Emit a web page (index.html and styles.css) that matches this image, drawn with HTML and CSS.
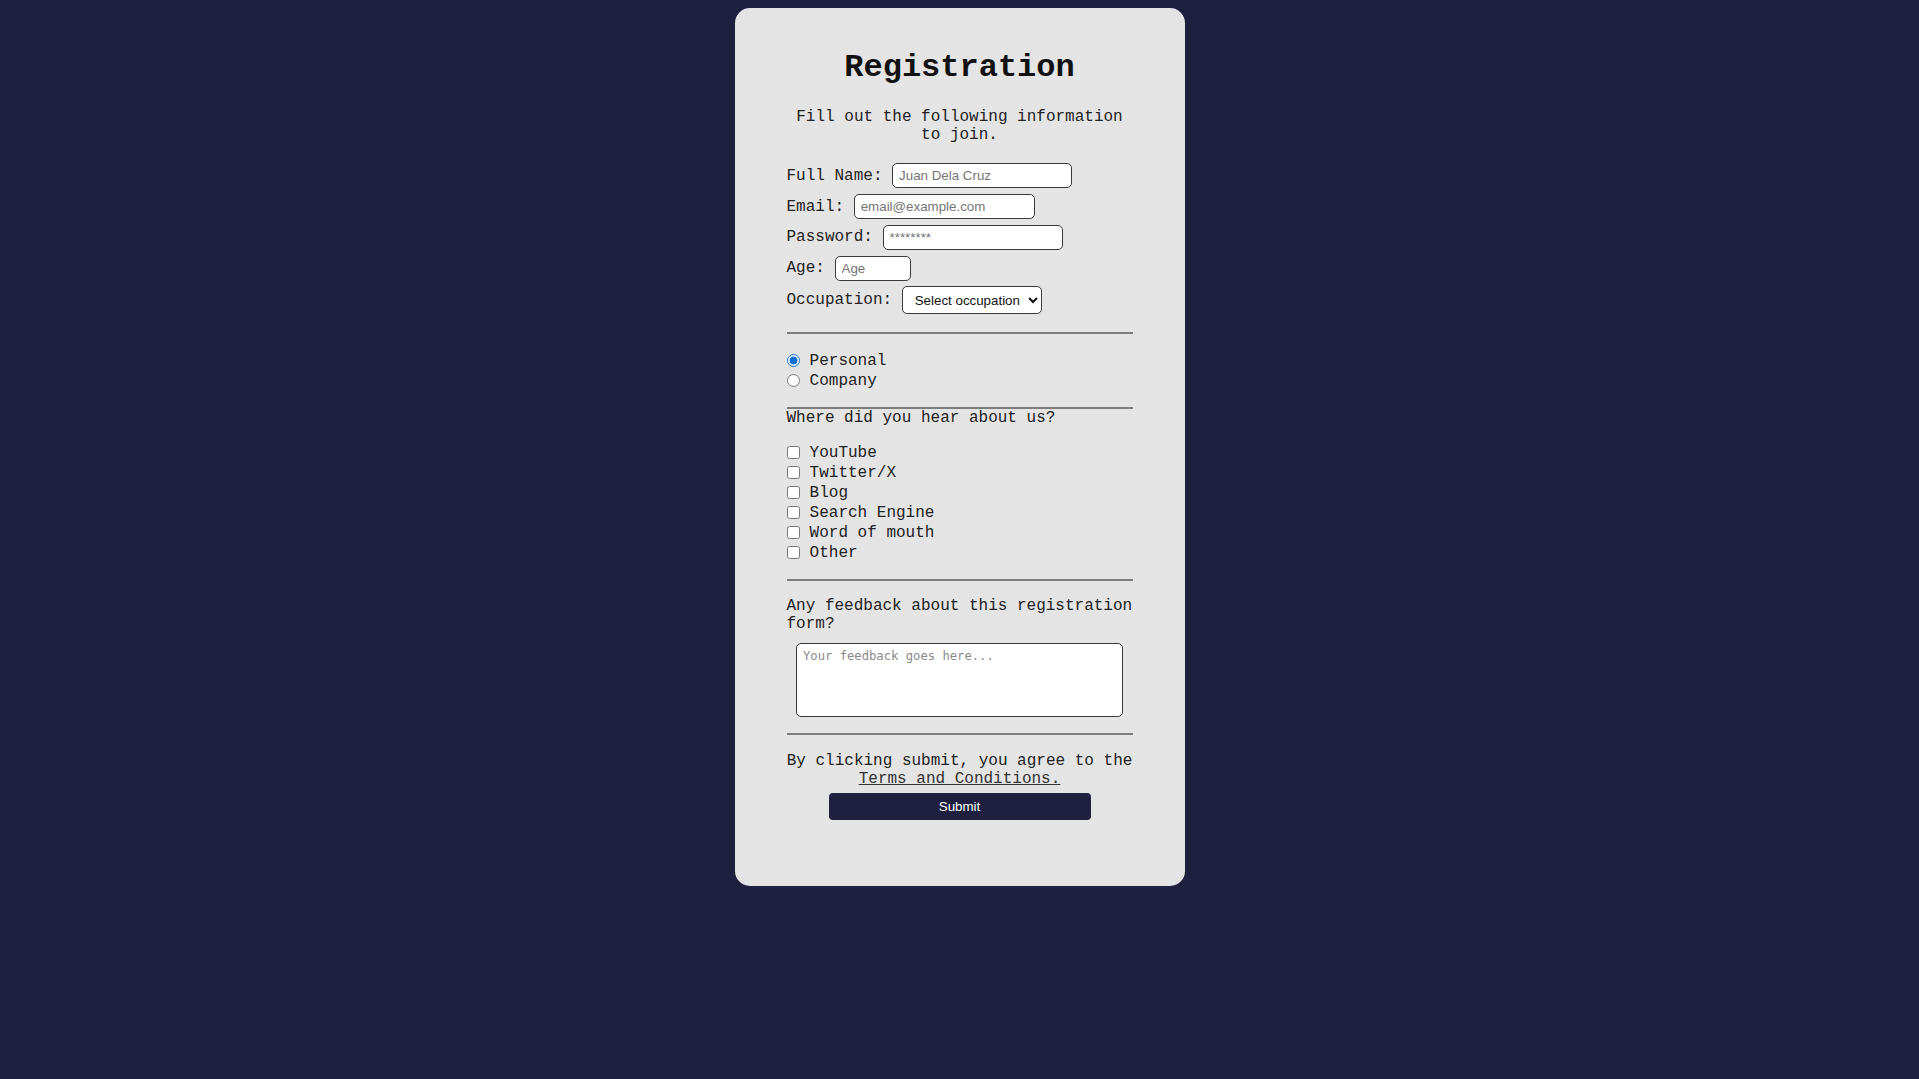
FILE: index.html
```html
<!DOCTYPE html>
<html lang="en">
<head>
<meta charset="utf-8">
<title>Registration</title>
<link rel="stylesheet" href="styles.css">
</head>
<body>
<main class="card">
  <h1 class="title">Registration</h1>
  <p class="subtitle">Fill out the following information to join.</p>
  <form class="form">
    <div class="field"><label class="label" for="name">Full Name:</label><input class="text-input w180" id="name" type="text" placeholder="Juan Dela Cruz"></div>
    <div class="field"><label class="label" for="email">Email:</label><input class="text-input w181" id="email" type="email" placeholder="email@example.com"></div>
    <div class="field"><label class="label" for="pw">Password:</label><input class="text-input w180" id="pw" type="password" placeholder="********"></div>
    <div class="field"><label class="label" for="age">Age:</label><input class="text-input w76" id="age" type="number" placeholder="Age"></div>
    <div class="field field-select"><label class="label" for="occ">Occupation:</label><select class="select" id="occ"><option>Select occupation</option><option>Student</option><option>Employed</option><option>Other</option></select></div>

    <div class="divider d1"></div>

    <div class="options radios">
      <label class="option"><input class="mark" type="radio" name="type" checked> Personal</label>
      <label class="option"><input class="mark" type="radio" name="type"> Company</label>
    </div>

    <div class="divider d2"></div>
    <p class="question">Where did you hear about us?</p>

    <div class="options checks">
      <label class="option"><input class="mark" type="checkbox"> YouTube</label>
      <label class="option"><input class="mark" type="checkbox"> Twitter/X</label>
      <label class="option"><input class="mark" type="checkbox"> Blog</label>
      <label class="option"><input class="mark" type="checkbox"> Search Engine</label>
      <label class="option"><input class="mark" type="checkbox"> Word of mouth</label>
      <label class="option"><input class="mark" type="checkbox"> Other</label>
    </div>

    <div class="divider d3"></div>
    <p class="question feedback-q">Any feedback about this registration form?</p>
    <textarea class="feedback" placeholder="Your feedback goes here..."></textarea>

    <div class="divider d4"></div>
    <p class="terms">By clicking submit, you agree to the <a class="terms-link" href="#">Terms and Conditions.</a></p>
    <button class="submit" type="button">Submit</button>
  </form>
</main>
</body>
</html>
```
FILE: styles.css
```css
html, body {
  margin: 0;
  padding: 0;
}
body {
  background: #1f2040;
  font-family: "Liberation Mono", "Courier New", monospace;
  font-size: 16px;
  color: #222;
  min-height: 1079px;
}
.card {
  box-sizing: border-box;
  width: 450px;
  margin: 8px auto 0;
  padding: 20px 52px 66px;
  background: #e4e4e4;
  border-radius: 15px;
}
.title {
  margin: 21.44px 0;
  text-align: center;
  font-size: 32px;
  font-weight: bold;
  color: #111;
}
.subtitle {
  margin: 0 0 19.6px;
  text-align: center;
}
.form {
  margin: 0;
}
.field {
  display: flex;
  align-items: center;
  height: 25px;
  margin-bottom: 5.75px;
}
.field-select {
  height: 28px;
  margin-bottom: 0;
}
.label {
  margin-right: 9.6px;
  white-space: pre;
}
.text-input {
  box-sizing: border-box;
  height: 25px;
  padding: 0 6px;
  border: 1px solid #3a3a3a;
  border-radius: 5px;
  background: #fff;
  font-family: "Liberation Sans", Arial, sans-serif;
  font-size: 13.33px;
  color: #222;
  outline: none;
}
.text-input::placeholder {
  color: #757575;
}
.w180 { width: 180px; }
.w181 { width: 181px; }
.w76 { width: 76px; }
.select {
  box-sizing: border-box;
  width: 140px;
  height: 28px;
  padding: 0 4px 0 8px;
  border: 1px solid #3a3a3a;
  border-radius: 5px;
  background: #fff;
  font-family: "Liberation Sans", Arial, sans-serif;
  font-size: 13.33px;
  color: #111;
}
.divider {
  height: 2px;
  background: #7c7c7c;
}
.d1 { margin-top: 18px; }
.d2 { margin-top: 16px; }
.d3 { margin-top: 16px; }
.d4 { margin-top: 16px; }
.radios { margin-top: 17px; }
.checks { margin-top: 16px; }
.option {
  display: flex;
  align-items: center;
  height: 20px;
  white-space: pre;
}
.mark {
  width: 13px;
  height: 13px;
  margin: -2px 0.5px 0 0;
  flex: none;
}
.radios .mark {
  accent-color: #0b6fd8;
}
.question {
  margin: 0;
}
.feedback-q {
  margin-top: 16px;
}
.feedback {
  display: block;
  box-sizing: border-box;
  width: 327px;
  height: 74px;
  margin: 10px auto 0;
  padding: 5px 6px;
  border: 1px solid #3a3a3a;
  border-radius: 5px;
  background: #fff;
  font-family: "DejaVu Sans Mono", monospace;
  font-size: 12.2px;
  resize: none;
  outline: none;
}
.feedback::placeholder {
  color: #8a8a8a;
}
.terms {
  margin: 17px 0 0;
  text-align: center;
}
.terms-link {
  color: #333;
  text-decoration: underline;
}
.submit {
  display: block;
  width: 262px;
  height: 27px;
  margin: 5px auto 0;
  padding: 0;
  border: none;
  border-radius: 4px;
  background: #1f1f3f;
  color: #fff;
  font-family: "Liberation Sans", Arial, sans-serif;
  font-size: 13.33px;
  cursor: pointer;
}
```
